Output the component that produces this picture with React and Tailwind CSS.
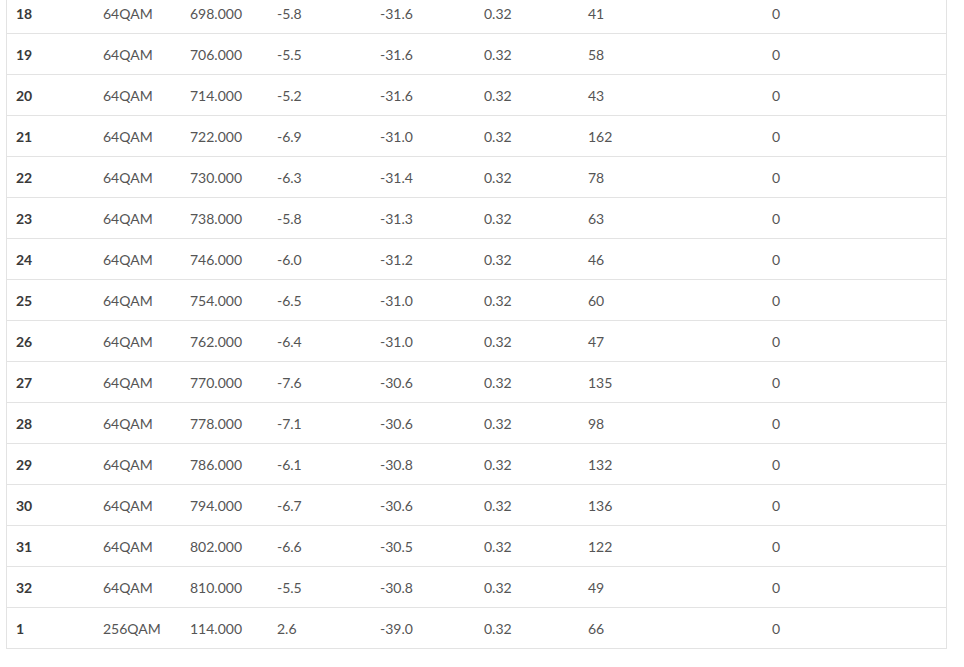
import React from "react";

const rows = [
  ["18", "64QAM", "698.000", "-5.8", "-31.6", "0.32", "41", "0"],
  ["19", "64QAM", "706.000", "-5.5", "-31.6", "0.32", "58", "0"],
  ["20", "64QAM", "714.000", "-5.2", "-31.6", "0.32", "43", "0"],
  ["21", "64QAM", "722.000", "-6.9", "-31.0", "0.32", "162", "0"],
  ["22", "64QAM", "730.000", "-6.3", "-31.4", "0.32", "78", "0"],
  ["23", "64QAM", "738.000", "-5.8", "-31.3", "0.32", "63", "0"],
  ["24", "64QAM", "746.000", "-6.0", "-31.2", "0.32", "46", "0"],
  ["25", "64QAM", "754.000", "-6.5", "-31.0", "0.32", "60", "0"],
  ["26", "64QAM", "762.000", "-6.4", "-31.0", "0.32", "47", "0"],
  ["27", "64QAM", "770.000", "-7.6", "-30.6", "0.32", "135", "0"],
  ["28", "64QAM", "778.000", "-7.1", "-30.6", "0.32", "98", "0"],
  ["29", "64QAM", "786.000", "-6.1", "-30.8", "0.32", "132", "0"],
  ["30", "64QAM", "794.000", "-6.7", "-30.6", "0.32", "136", "0"],
  ["31", "64QAM", "802.000", "-6.6", "-30.5", "0.32", "122", "0"],
  ["32", "64QAM", "810.000", "-5.5", "-30.8", "0.32", "49", "0"],
  ["1", "256QAM", "114.000", "2.6", "-39.0", "0.32", "66", "0"],
];

export default function App() {
  return (
    <div className="bg-white w-[964px] h-[667px] overflow-hidden" style={{ fontFamily: "Lato, 'Liberation Sans', sans-serif" }}>
      <div className="ml-[6px] mt-[-8px] w-[941px] border border-[#e3e3e3]">
        <div className="grid grid-cols-[87px_87px_87px_103px_104px_104px_184px_1fr]">
          {rows.map((r, i) => (
            <React.Fragment key={i}>
              {r.map((c, j) => (
                <div
                  key={j}
                  className={`flex items-center pl-[9px] pt-[1px] text-[14px] ${i > 0 ? "h-[41px] border-t border-[#e3e3e3]" : "h-[40px]"} ${j === 0 ? "font-bold text-[#3a3a3a]" : "text-[#555]"}`}
                >
                  {c}
                </div>
              ))}
            </React.Fragment>
          ))}
        </div>
      </div>
    </div>
  );
}
